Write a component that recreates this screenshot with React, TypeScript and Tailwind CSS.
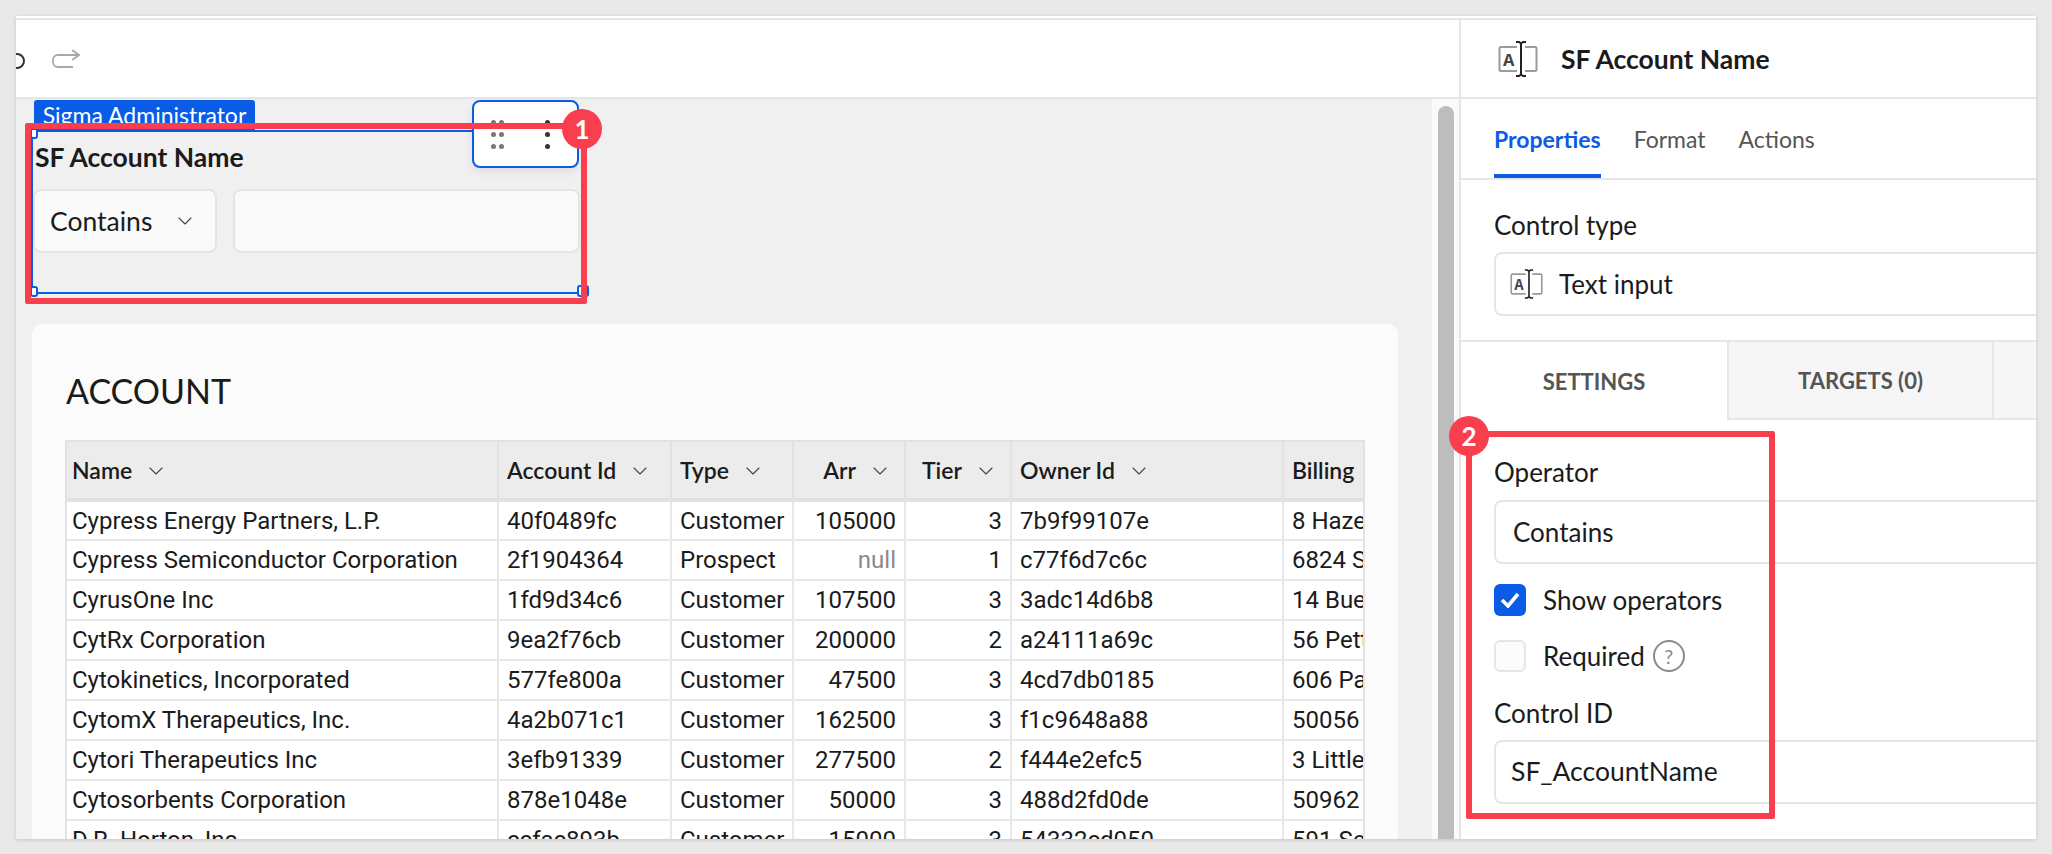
import { ChevronDown } from "lucide-react";

const rows = [
  ["Cypress Energy Partners, L.P.", "40f0489fc", "Customer", "105000", "3", "7b9f99107e", "8 Haze"],
  ["Cypress Semiconductor Corporation", "2f1904364", "Prospect", "null", "1", "c77f6d7c6c", "6824 S"],
  ["CyrusOne Inc", "1fd9d34c6", "Customer", "107500", "3", "3adc14d6b8", "14 Bue"],
  ["CytRx Corporation", "9ea2f76cb", "Customer", "200000", "2", "a24111a69c", "56 Pett"],
  ["Cytokinetics, Incorporated", "577fe800a", "Customer", "47500", "3", "4cd7db0185", "606 Pa"],
  ["CytomX Therapeutics, Inc.", "4a2b071c1", "Customer", "162500", "3", "f1c9648a88", "50056"],
  ["Cytori Therapeutics Inc", "3efb91339", "Customer", "277500", "2", "f444e2efc5", "3 Little"],
  ["Cytosorbents Corporation", "878e1048e", "Customer", "50000", "3", "488d2fd0de", "50962"],
  ["D.R. Horton, Inc.", "ccfac893b", "Customer", "15000", "3", "54332cd050", "591 Se"],
];

function TextInputIcon({ className }: { className: string }) {
  return (
    <svg viewBox="0 0 40 36" fill="none" className={className}>
      <path d="M19 6H3a1.5 1.5 0 0 0-1.5 1.5v21A1.5 1.5 0 0 0 3 30h16M27 6h10a1.5 1.5 0 0 1 1.5 1.5v21A1.5 1.5 0 0 1 37 30H27" stroke="#9a9a9a" strokeWidth="2" />
      <path d="M18 1h3l2 1.5L25 1h3M18 35h3l2-1.5 2 1.5h3M23 3v30" stroke="#222" strokeWidth="2" />
      <text x="5" y="25" fontSize="19" fontWeight="700" fill="#444" fontFamily="Liberation Mono, monospace">A</text>
    </svg>
  );
}

function HeaderCell({ label, right, first }: { label: string; right?: boolean; first?: boolean }) {
  return (
    <th className={`h-[58px] border-r-2 border-b-[4px] border-r-[#e2e2e2] border-b-[#e2e2e2] bg-[#ececec] p-0 pt-px font-semibold ${first ? "pl-[5px]" : "pl-2"} ${right ? "pr-3" : "pr-2"}`}>
      <div className={`flex items-center gap-3 ${right ? "justify-end" : ""}`}>
        <span>{label}</span>
        <ChevronDown size={24} strokeWidth={1.1} className="-my-1 shrink-0 text-[#444]" />
      </div>
    </th>
  );
}

export default function App() {
  return (
    <div className="relative h-[854px] w-[2052px] overflow-hidden bg-[#e9e9e9] pt-4 pl-4 font-['Lato',sans-serif] text-[#1b1b1b]">
      <div className="flex h-[823px] w-[2020px] flex-col overflow-hidden bg-white shadow-[0_1px_4px_rgba(0,0,0,0.15)]">
        <div className="h-1 shrink-0 border-b-2 border-[#e6e6e6] bg-white" />
        <div className="flex min-h-0 flex-1">
          {/* left side */}
          <div className="flex w-[1443px] shrink-0 flex-col">
            <div className="flex h-[79px] shrink-0 items-center overflow-hidden border-b-2 border-[#e6e6e6] bg-white">
              <svg width="10" height="18" viewBox="0 0 10 18" fill="none" className="mt-1 shrink-0">
                <path d="M0 2h1a7 7 0 0 1 0 14H0" stroke="#333" strokeWidth="2" />
              </svg>
              <svg width="28" height="20" viewBox="0 0 28 20" fill="none" className="ml-[26px] shrink-0">
                <path d="M27 6H6a5 5 0 0 0-5 5v2a5 5 0 0 0 5 5h15M20 1l7 5-7 5" stroke="#a8a8a8" strokeWidth="1.8" />
              </svg>
            </div>
            <div className="flex min-h-0 flex-1">
              <div className="relative min-w-0 flex-1 overflow-hidden bg-[#f0f0f0] pt-[31px] pl-[15px]">
                <div className="absolute top-px left-[18px] z-10 h-[30px] w-[221px] rounded-t-[3px] bg-[#0a5ce6] text-center text-[23px] leading-[30px] text-white">
                  Sigma Administrator
                </div>
                <div className="absolute top-[1px] left-[456px] z-20 flex h-[68px] w-[107px] items-center gap-[41px] rounded-lg border-2 border-[#0a5ce6] bg-white pl-[17px] shadow-[0_4px_10px_rgba(0,0,0,0.08)]">
                  <div className="grid grid-cols-2 gap-x-[3px] gap-y-[7px]">
                    {[0, 1, 2, 3, 4, 5].map((i) => (
                      <span key={i} className="size-[5px] rounded-full bg-[#777]" />
                    ))}
                  </div>
                  <div className="flex flex-col gap-[7px]">
                    {[0, 1, 2].map((i) => (
                      <span key={i} className="size-[5px] rounded-full bg-[#333]" />
                    ))}
                  </div>
                </div>
                {/* selected control */}
                <div className="relative h-[164px] w-[549px] border-y-2 border-l-2 border-[#0a5ce6]">
                  <p className="mt-[9px] ml-[2px] text-[26.5px] leading-[32px] font-bold">SF Account Name</p>
                  <div className="mt-[16px] flex gap-[16px]">
                    <div className="flex h-[64px] w-[184px] items-center justify-between rounded-lg border-2 border-[#e4e4e4] bg-[#fafafa] pr-[18px] pl-[15px] text-[26.5px]">
                      <span className="pt-[2px]">Contains</span>
                      <ChevronDown size={24} strokeWidth={1.1} className="text-[#444]" />
                    </div>
                    <div className="h-[64px] flex-1 rounded-lg border-2 border-[#e4e4e4] bg-[#fafafa]" />
                  </div>
                  <span className="absolute -bottom-[5px] -left-[3px] h-[11px] w-[8px] rounded-[3px] border-2 border-[#0a5ce6] bg-white" />
                  <span className="absolute -top-[4px] -left-[3px] h-[11px] w-[8px] rounded-[3px] border-2 border-[#0a5ce6] bg-white" />
                  <span className="absolute -right-[9px] -bottom-[5px] h-[12px] w-[12px] rounded-[3px] border-2 border-[#0a5ce6] bg-white" />
                </div>
                <div className="mt-[30px] ml-px h-[520px] w-[1366px] rounded-[10px] bg-[#fbfbfb] pt-[39px] pl-[33px]">
                  <h2 className="ml-px text-[34px] leading-[56px] font-normal">ACCOUNT</h2>
                  <div className="mt-[21px] w-[1300px] overflow-hidden border-2 border-[#e2e2e2]">
                    <table className="w-[1300px] table-fixed border-collapse text-left">
                      <colgroup>
                        <col className="w-[431px]" />
                        <col className="w-[173px]" />
                        <col className="w-[122px]" />
                        <col className="w-[112px]" />
                        <col className="w-[106px]" />
                        <col className="w-[272px]" />
                        <col className="w-[84px]" />
                      </colgroup>
                      <thead className="text-[23px]">
                        <tr>
                          <HeaderCell label="Name" first />
                          <HeaderCell label="Account Id" />
                          <HeaderCell label="Type" />
                          <HeaderCell label="Arr" right />
                          <HeaderCell label="Tier" right />
                          <HeaderCell label="Owner Id" />
                          <th className="border-b-[4px] border-b-[#e2e2e2] bg-[#ececec] pl-2 font-semibold whitespace-nowrap">Billing</th>
                        </tr>
                      </thead>
                      <tbody className="font-['Roboto',sans-serif] text-[24px]">
                        {rows.map((row) => (
                          <tr key={row[0]} className="h-10">
                            {row.map((cell, i) => (
                              <td
                                key={i}
                                className={`overflow-hidden border-r-2 border-b-2 border-[#e8e8e8] bg-white py-0 leading-[36px] whitespace-nowrap ${i === 0 ? "pr-2 pl-[5px]" : "px-2"} ${i === 3 || i === 4 ? "text-right" : ""} ${cell === "null" ? "text-[#8a8a8a]" : ""} ${i === 6 ? "border-r-0 pr-0" : ""}`}
                              >
                                {cell}
                              </td>
                            ))}
                          </tr>
                        ))}
                      </tbody>
                    </table>
                  </div>
                </div>
                {/* annotation 1 */}
                <div className="pointer-events-none absolute top-[24px] left-[9px] z-30 h-[181px] w-[562px] rounded-[2px] border-[6px] border-[#f93e4d]" />
                <div className="absolute top-[10px] left-[546px] z-30 flex size-[40px] items-center justify-center rounded-full bg-[#f93e4d] text-[26px] font-bold text-white">
                  1
                </div>
              </div>
              <div className="w-[27px] shrink-0 bg-[#fafafa] pt-[7px] pl-[6px]">
                <div className="h-full w-4 rounded-t-lg bg-[#bdbdbd]" />
              </div>
            </div>
          </div>

          {/* right panel */}
          <div className="relative min-w-0 flex-1 overflow-hidden border-l-2 border-[#e6e6e6] bg-white">
            <div className="flex h-[79px] items-center border-b-2 border-[#e6e6e6] pl-[37px]">
              <TextInputIcon className="h-[36px] w-[40px]" />
              <span className="ml-[23px] pt-[3px] text-[26.5px] font-bold">SF Account Name</span>
            </div>
            <div className="flex h-[81px] items-end gap-[33px] border-b-2 border-[#e6e6e6] pl-[33px] text-[23px] text-[#555]">
              <div className="flex h-[81px] items-center border-b-[4px] border-[#0a5ce6] pt-[8px] font-bold text-[#0a5ce6]">Properties</div>
              <div className="flex h-[81px] items-center pt-[4px]">Format</div>
              <div className="flex h-[81px] items-center pt-[4px]">Actions</div>
            </div>
            <div className="h-[162px] border-b-2 border-[#e6e6e6] px-[33px] pt-[27px]">
              <p className="text-[26px] leading-[36px]">Control type</p>
              <div className="mt-[9px] flex h-[64px] w-[600px] items-center rounded-lg border-2 border-[#e6e6e6] pl-[14px] text-[26px]">
                <TextInputIcon className="h-[30px] w-[33px]" />
                <span className="ml-[16px]">Text input</span>
              </div>
            </div>
            <div className="flex h-[78px] text-[22px] font-bold text-[#555]">
              <div className="flex w-[266px] items-center justify-center">SETTINGS</div>
              <div className="flex w-[267px] items-center justify-center border-x-2 border-b-2 border-[#e6e6e6] bg-[#f6f6f6]">TARGETS (0)</div>
              <div className="flex-1 border-b-2 border-[#e6e6e6] bg-[#f6f6f6]" />
            </div>
            <div className="px-[33px] pt-[35px]">
              <p className="text-[26px] leading-[34px]">Operator</p>
              <div className="mt-[11px] flex h-[64px] w-[600px] items-center rounded-lg border-2 border-[#e6e6e6] pl-[17px] text-[26px]">Contains</div>
              <div className="mt-[20px] flex items-center">
                <div className="flex size-[32px] items-center justify-center rounded-[6px] bg-[#0a5ce6]">
                  <svg width="20" height="16" viewBox="0 0 20 16" fill="none">
                    <path d="M2 8l6 6L18 2" stroke="white" strokeWidth="3.6" />
                  </svg>
                </div>
                <span className="ml-[17px] text-[26px] leading-[32px]">Show operators</span>
              </div>
              <div className="mt-[24px] flex items-center">
                <div className="size-[32px] rounded-[6px] border-2 border-[#e6e6e6] bg-[#fcfcfc]" />
                <span className="ml-[17px] text-[26px] leading-[32px]">Required</span>
                <span className="ml-[8px] flex size-[32px] items-center justify-center rounded-full border-2 border-[#8a8a8a] text-[20px] text-[#8a8a8a]">?</span>
              </div>
              <p className="mt-[23px] text-[26px] leading-[36px]">Control ID</p>
              <div className="mt-[9px] flex h-[64px] w-[600px] items-center rounded-lg border-2 border-[#e6e6e6] pl-[15px] text-[26.5px]">SF_AccountName</div>
            </div>
            {/* annotation 2 */}
            <div className="pointer-events-none absolute top-[411px] left-[5px] h-[388px] w-[309px] rounded-[2px] border-[6px] border-[#f93e4d]" />
          </div>
        </div>
      </div>
      {/* badge overlaps the panel edge */}
      <div className="absolute top-[416px] left-[1449px] flex size-[40px] items-center justify-center rounded-full bg-[#f93e4d] text-[26px] font-bold text-white">
        2
      </div>
    </div>
  );
}
